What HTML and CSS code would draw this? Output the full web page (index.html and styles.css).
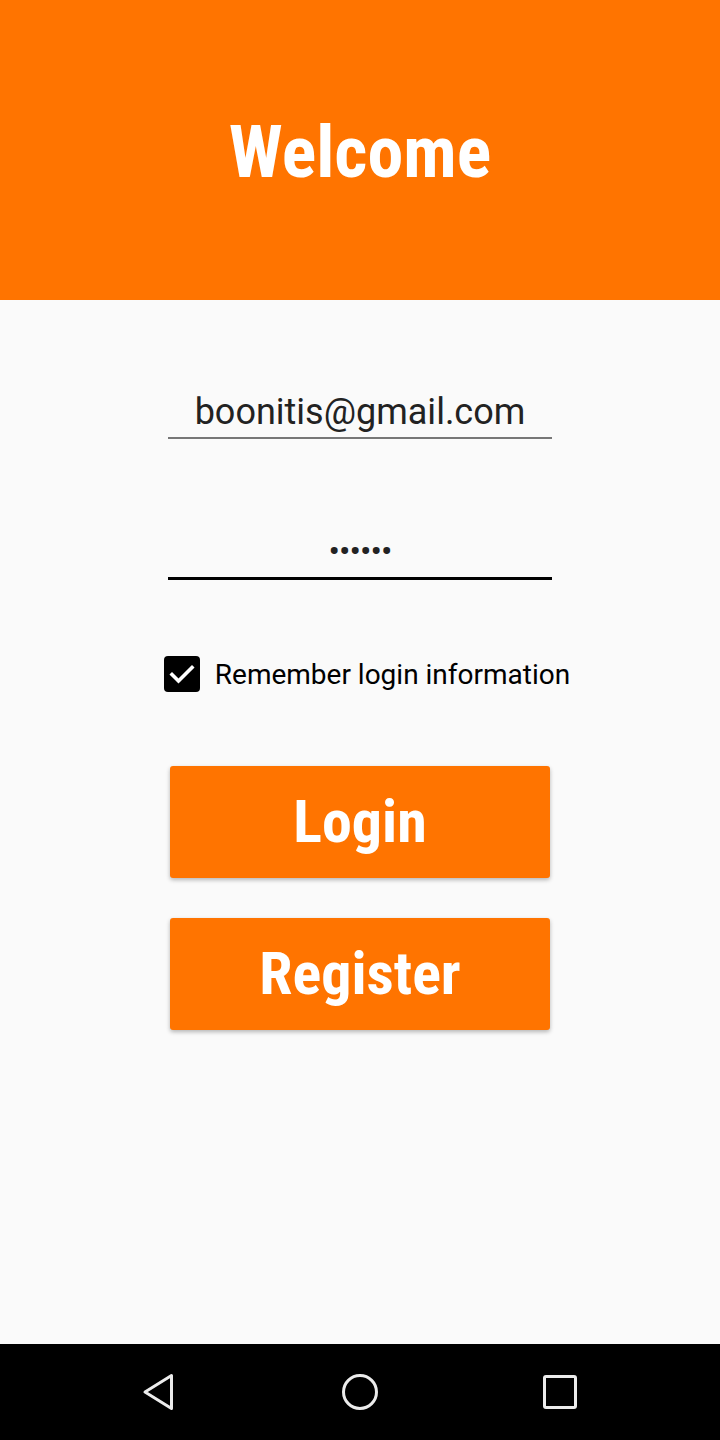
FILE: index.html
```html
<!DOCTYPE html>
<html>
<head>
<meta charset="utf-8">
<link rel="stylesheet" href="styles.css">
</head>
<body>
<div class="screen">
  <header class="header"><h1 class="title">Welcome</h1></header>
  <main class="content">
    <div class="field email"><span class="value">boonitis@gmail.com</span></div>
    <div class="field password"><span class="dots">••••••</span></div>
    <label class="remember">
      <span class="box"><svg width="36" height="36" viewBox="0 0 36 36"><path d="M8 18.5 L14.5 25 L28 11.5" fill="none" stroke="#fff" stroke-width="3.6" stroke-linecap="square"/></svg></span>
      <span class="remember-text">Remember login information</span>
    </label>
    <div class="btn">Login</div>
    <div class="btn">Register</div>
  </main>
  <nav class="navbar">
    <svg width="40" height="40" viewBox="0 0 40 40"><path d="M31.5 3.5 L31.5 36.5 L5 20 Z" fill="none" stroke="#ececec" stroke-width="3" stroke-linejoin="round"/></svg>
    <svg width="40" height="40" viewBox="0 0 40 40"><circle cx="20" cy="20" r="16.5" fill="none" stroke="#ececec" stroke-width="3"/></svg>
    <svg width="40" height="40" viewBox="0 0 40 40"><rect x="4.5" y="4.5" width="31" height="31" rx="1.5" fill="none" stroke="#ececec" stroke-width="3"/></svg>
  </nav>
</div>
</body>
</html>
```
FILE: styles.css
```css
* { box-sizing: border-box; }
html, body { margin: 0; padding: 0; }
body { width: 720px; height: 1440px; background: #fafafa; font-family: Roboto, "Noto Sans", sans-serif; }
.screen { display: flex; flex-direction: column; height: 1440px; }
.header { height: 300px; background: #ff7400; display: flex; align-items: center; justify-content: center; }
.title { margin: 0; color: #fff; font-family: "Roboto Condensed", Roboto, sans-serif; font-stretch: condensed; font-weight: 700; font-size: 72px; line-height: 1; padding-top: 6px; }
.content { flex: 1; display: flex; flex-direction: column; align-items: center; padding-top: 85px; }
.field { width: 384px; display: flex; justify-content: center; }
.email { height: 54px; border-bottom: 2px solid #777; align-items: flex-end; padding-bottom: 7px; }
.email .value { font-size: 36px; color: #222; line-height: 1; }
.password { margin-top: 87px; height: 54px; border-bottom: 3px solid #000; align-items: flex-start; padding-top: 8px; }
.dots { font-size: 34px; line-height: 1; color: #222; letter-spacing: -1px; font-family: Roboto, sans-serif; }
.remember { margin-top: 76px; display: flex; align-items: center; gap: 15px; margin-left: 14px; }
.box { width: 36px; height: 36px; background: #000; border-radius: 4px; display: block; }
.box svg { display: block; }
.remember-text { font-size: 28px; color: #000; }
.btn { width: 380px; height: 112px; background: #ff7400; border-radius: 3px; color: #fff; font-family: "Roboto Condensed", Roboto, sans-serif; font-stretch: condensed; font-weight: 700; font-size: 60px; display: flex; align-items: center; justify-content: center; box-shadow: 0 2px 4px rgba(0,0,0,0.28); padding-bottom: 2px; }
.remember + .btn { margin-top: 74px; }
.btn + .btn { margin-top: 40px; }
.navbar { height: 96px; background: #000; display: flex; justify-content: space-between; align-items: center; padding: 0 140px 0 140px; }
.navbar svg { display: block; }
```
